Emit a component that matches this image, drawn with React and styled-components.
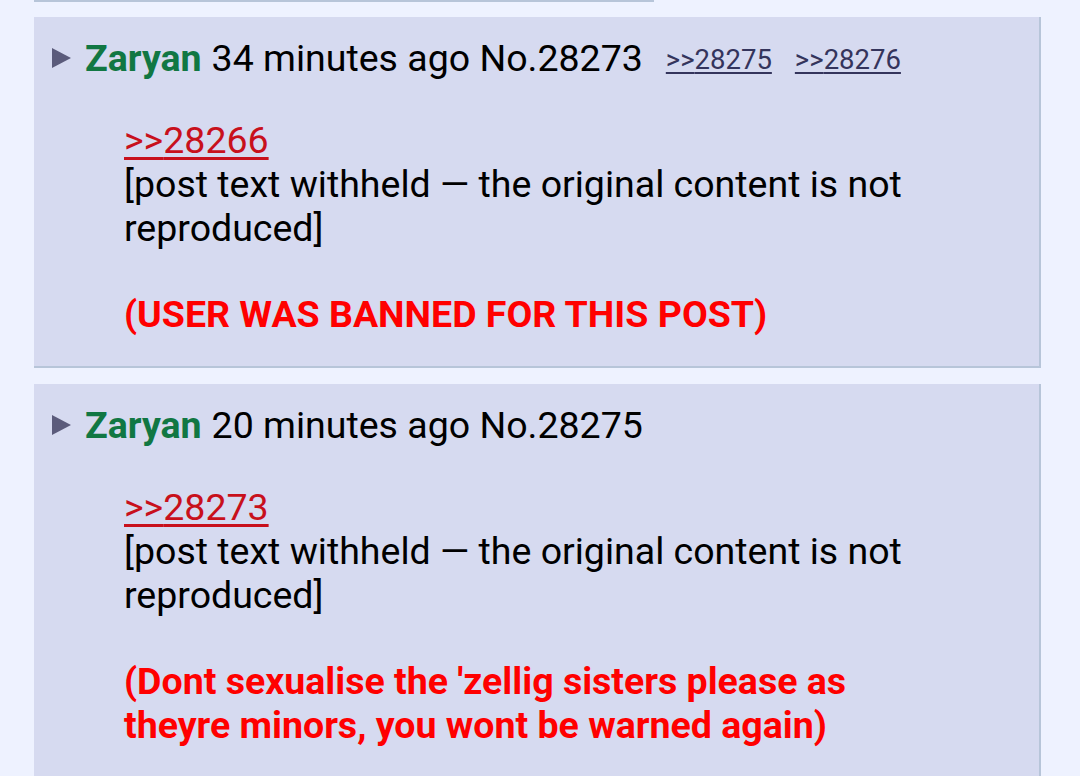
import React from "react";
import styled, { createGlobalStyle } from "styled-components";

const Global = createGlobalStyle`
  html, body { margin: 0; padding: 0; background: #eef2ff; }
  body { font-family: Roboto, "Noto Sans", "Liberation Sans", sans-serif; color: #000; }
`;

const Page = styled.div`
  width: 1080px;
  height: 776px;
  overflow: hidden;
  padding-left: 34px;
  box-sizing: border-box;
  display: flex;
  flex-direction: column;
  gap: 15px;
`;

const PrevTail = styled.div`
  width: 620px;
  height: 0;
  border-bottom: 2px solid #b7c5d9;
  background: #d6daf0;
`;

const Post = styled.article`
  width: 1007px;
  box-sizing: border-box;
  background: #d6daf0;
  border-right: 2px solid #b7c5d9;
  border-bottom: 2px solid #b7c5d9;
  padding: 19px 18px 30px 18px;
  flex-shrink: 0;
  & + & {
    margin-top: 1px;
  }
`;

const Header = styled.div`
  display: flex;
  align-items: center;
  height: 44px;
  font-size: 37.5px;
  line-height: 44px;
  white-space: nowrap;
`;

const Toggle = styled.span`
  width: 0;
  height: 0;
  border-top: 10px solid transparent;
  border-bottom: 10px solid transparent;
  border-left: 19px solid #5b5b7b;
  margin-right: 14px;
`;

const Name = styled.span`
  color: #117743;
  font-weight: 700;
  margin-right: 10px;
`;

const Meta = styled.span`
  color: #000;
`;

const Backlinks = styled.span`
  display: inline-flex;
  gap: 23px;
  margin-left: 23px;
  font-size: 27.5px;
  position: relative;
  top: 2px;
`;

const Backlink = styled.a`
  color: #34345c;
  text-decoration: underline;
  text-underline-offset: 3px;
`;

const Body = styled.blockquote`
  margin: 38px 0 0 72px;
  max-width: 790px;
  font-size: 37.5px;
  line-height: 44px;
`;

const Quote = styled.a`
  display: block;
  color: #c8101c;
  text-decoration: underline;
  text-underline-offset: 4px;
`;

const Withheld = styled.p`
  margin: 0;
  color: #000;
`;

const ModNote = styled.p`
  margin: 42px 0 0;
  color: #f00;
  font-weight: 700;
`;

const posts = [
  {
    time: "34 minutes ago",
    no: "28273",
    backlinks: ["28275", "28276"],
    quote: "28266",
    note: "(USER WAS BANNED FOR THIS POST)",
  },
  {
    time: "20 minutes ago",
    no: "28275",
    backlinks: [],
    quote: "28273",
    note: "(Dont sexualise the 'zellig sisters please as theyre minors, you wont be warned again)",
  },
];

export default function App() {
  return (
    <>
      <Global />
      <Page>
        <PrevTail />
        {posts.map((p) => (
          <Post key={p.no}>
            <Header>
              <Toggle />
              <Name>Zaryan</Name>
              <Meta>
                {p.time} No.{p.no}
              </Meta>
              {p.backlinks.length > 0 && (
                <Backlinks>
                  {p.backlinks.map((b) => (
                    <Backlink key={b} href="#">&gt;&gt;{b}</Backlink>
                  ))}
                </Backlinks>
              )}
            </Header>
            <Body>
              <Quote href="#">&gt;&gt;{p.quote}</Quote>
              <Withheld>
                [post text withheld — the original content is not reproduced]
              </Withheld>
              <ModNote>{p.note}</ModNote>
            </Body>
          </Post>
        ))}
      </Page>
    </>
  );
}
